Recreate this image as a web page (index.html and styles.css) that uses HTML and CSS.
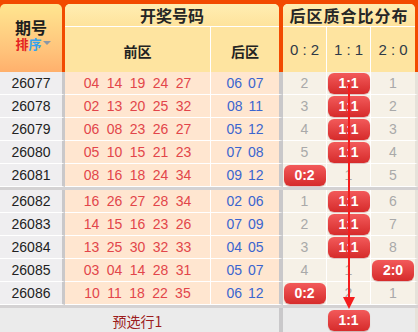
FILE: index.html
```html
<!DOCTYPE html>
<html lang="zh-CN">
<head>
<meta charset="utf-8">
<title>后区质合比分布</title>
<link rel="stylesheet" href="styles.css">
</head>
<body>
<div class="chart">
  <div class="head">
    <div class="h-no">
      <div class="h-no-t">期号</div>
      <div class="sort"><span class="s-r">排</span><span class="s-b">序</span><i class="tri"></i></div>
    </div>
    <div class="h-grp h-draw">
      <div class="h-title">开奖号码</div>
      <div class="h-sub"><div class="hs-front">前区</div><div class="hs-back">后区</div></div>
    </div>
    <div class="h-grp h-dist">
      <div class="h-title">后区质合比分布</div>
      <div class="h-sub"><div class="hs-d">0 : 2</div><div class="hs-d">1 : 1</div><div class="hs-d last">2 : 0</div></div>
    </div>
  </div>

  <div class="rows">
    <div class="row"><div class="c-no">26077</div><div class="c-front">04 14 19 24 27</div><div class="c-back">06 07</div><div class="c-d">2</div><div class="c-d"><span class="ball">1:1</span></div><div class="c-d last">1</div></div>
    <div class="row"><div class="c-no">26078</div><div class="c-front">02 13 20 25 32</div><div class="c-back">08 11</div><div class="c-d">3</div><div class="c-d"><span class="ball">1:1</span></div><div class="c-d last">2</div></div>
    <div class="row"><div class="c-no">26079</div><div class="c-front">06 08 23 26 27</div><div class="c-back">05 12</div><div class="c-d">4</div><div class="c-d"><span class="ball">1:1</span></div><div class="c-d last">3</div></div>
    <div class="row"><div class="c-no">26080</div><div class="c-front">05 10 15 21 23</div><div class="c-back">07 08</div><div class="c-d">5</div><div class="c-d"><span class="ball">1:1</span></div><div class="c-d last">4</div></div>
    <div class="row"><div class="c-no">26081</div><div class="c-front">08 16 18 24 34</div><div class="c-back">09 12</div><div class="c-d"><span class="ball">0:2</span></div><div class="c-d">1</div><div class="c-d last">5</div></div>
    <div class="sep"></div>
    <div class="row"><div class="c-no">26082</div><div class="c-front">16 26 27 28 34</div><div class="c-back">02 06</div><div class="c-d">1</div><div class="c-d"><span class="ball">1:1</span></div><div class="c-d last">6</div></div>
    <div class="row"><div class="c-no">26083</div><div class="c-front">14 15 16 23 26</div><div class="c-back">07 09</div><div class="c-d">2</div><div class="c-d"><span class="ball">1:1</span></div><div class="c-d last">7</div></div>
    <div class="row"><div class="c-no">26084</div><div class="c-front">13 25 30 32 33</div><div class="c-back">04 05</div><div class="c-d">3</div><div class="c-d"><span class="ball">1:1</span></div><div class="c-d last">8</div></div>
    <div class="row"><div class="c-no">26085</div><div class="c-front">03 04 14 28 31</div><div class="c-back">05 07</div><div class="c-d">4</div><div class="c-d">1</div><div class="c-d last"><span class="ball">2:0</span></div></div>
    <div class="row"><div class="c-no">26086</div><div class="c-front">10 11 18 22 35</div><div class="c-back">06 12</div><div class="c-d"><span class="ball">0:2</span></div><div class="c-d">2</div><div class="c-d last">1</div></div>
    <div class="sep"></div>
    <div class="row foot"><div class="c-no"></div><div class="c-front">预选行1</div><div class="c-back"></div><div class="c-d"></div><div class="c-d"><span class="ball">1:1</span></div><div class="c-d last"></div></div>
  </div>

  <svg class="trend" width="418" height="332" viewBox="0 0 418 332" aria-hidden="true">
    <line x1="349" y1="84" x2="349" y2="299" stroke="#f51d1d" stroke-width="2"/>
    <polygon points="343,297 355,297 349,309" fill="#f51d1d"/>
  </svg>
</div>
</body>
</html>
```

FILE: styles.css
```css
html, body {
  margin: 0;
  padding: 0;
  background: #ffffff;
}

.chart {
  position: relative;
  width: 418px;
  height: 332px;
  overflow: hidden;
  font-family: "Liberation Sans", "Noto Sans CJK SC", Arial, sans-serif;
}

/* ---------- header ---------- */
.head {
  display: flex;
  box-sizing: border-box;
  height: 72px;
  padding-top: 4px;
  padding-right: 3px;
  background: #f24a00;
}

.h-no {
  width: 62px;
  border-radius: 5px 5px 0 0;
  background: linear-gradient(#ffe690, #ffc27a 70%, #ffb06c);
  display: flex;
  flex-direction: column;
  align-items: center;
  justify-content: center;
  padding-bottom: 8px;
  box-sizing: border-box;
}

.h-no-t {
  font-family: "Noto Sans CJK SC", sans-serif;
  font-weight: 700;
  font-size: 16px;
  line-height: 16px;
  color: #1e1e1e;
}

.sort {
  display: flex;
  align-items: center;
  font-family: "Noto Sans CJK SC", sans-serif;
  font-weight: 700;
  font-size: 13px;
  line-height: 13px;
  margin-top: 2px;
  margin-left: 4px;
}

.s-r { color: #e42222; }
.s-b { color: #34a2ee; }

.tri {
  display: block;
  width: 0;
  height: 0;
  margin-left: 1px;
  border-left: 4px solid transparent;
  border-right: 4px solid transparent;
  border-top: 4px solid #8a97a6;
}

.h-grp {
  display: flex;
  flex-direction: column;
  border-radius: 5px 5px 0 0;
  background: #fee6a1;
  overflow: hidden;
}

.h-draw {
  width: 214px;
  margin-left: 3px;
}

.h-dist {
  width: 132px;
  margin-left: 4px;
  box-shadow: inset 1px 1px 0 rgba(255, 255, 255, 0.55);
}

.h-title {
  height: 22px;
  border-bottom: 1px solid #ffffff;
  display: flex;
  align-items: center;
  justify-content: center;
  font-family: "Noto Sans CJK SC", sans-serif;
  font-weight: 700;
  font-size: 16px;
  color: #262626;
  background: linear-gradient(#ffeeb2, #fee39c);
}

.h-dist .h-title {
  letter-spacing: 1px;
}

.h-sub {
  flex: 1;
  display: flex;
  background: #fee4a0;
}

.hs-front, .hs-back {
  display: flex;
  align-items: center;
  justify-content: center;
  font-family: "Noto Sans CJK SC", sans-serif;
  font-weight: 700;
  font-size: 14px;
  color: #222222;
  padding-top: 3px;
}

.hs-front {
  width: 146px;
  box-sizing: border-box;
  border-right: 1px solid #ffffff;
}

.hs-back {
  flex: 1;
}

.hs-d {
  width: 44px;
  box-sizing: border-box;
  border-right: 1px solid #ffffff;
  display: flex;
  align-items: center;
  justify-content: center;
  font-size: 15px;
  color: #2e3a48;
}

.hs-d.last {
  border-right: 0;
}

/* ---------- body ---------- */
.rows {
  display: flex;
  flex-direction: column;
}

.row {
  display: grid;
  grid-template-columns: 65px 146px 72px 44px 44px 47px;
  height: 23px;
  font-size: 14px;
}

.row > div {
  box-sizing: border-box;
  display: flex;
  align-items: center;
  justify-content: center;
  border-bottom: 1px solid #ffffff;
}

.c-no {
  background: #efeef0;
  color: #222222;
  border-right: 3px solid #c9c8ca;
}

.c-front {
  background: #ffe6d0;
  color: #e2454a;
  word-spacing: 3.5px;
  border-right: 1px solid #ffffff;
}

.c-back {
  background: #ffe6d0;
  color: #3b65cf;
  word-spacing: 2px;
  border-right: 4px solid #c9c8ca;
}

.c-d {
  background: #f6f1e7;
  color: #a9a9a9;
  border-right: 1px solid #ffffff;
}

.c-d.last {
  border-right: 3px solid #e6e2da;
}

.ball {
  display: flex;
  align-items: center;
  justify-content: center;
  width: 42px;
  height: 21px;
  border-radius: 6px;
  background: linear-gradient(#f25a5a, #d62b2b);
  box-shadow: 0 1px 1px rgba(120, 0, 0, 0.25);
  color: #ffffff;
  font-weight: 700;
  font-size: 14px;
}

.sep {
  height: 3px;
  background: #d4d2d3;
}

.row.foot {
  height: 24px;
}

.row.foot > div {
  background: #ebebeb;
  border-bottom: 0;
}

.row.foot .c-front {
  color: #9c1c1c;
  font-family: "Noto Sans CJK SC", sans-serif;
  font-size: 14px;
  padding-top: 1px;
}

.row.foot .c-no,
.row.foot .c-front {
  border-right-color: #ebebeb;
}

.row.foot .c-back {
  border-right-color: #c9c8ca;
}

.row.foot .c-d {
  border-right-color: #ebebeb;
}

.row.foot .c-d.last {
  border-right-color: #e6e2da;
}

.trend {
  position: absolute;
  left: 0;
  top: 0;
  pointer-events: none;
}
```
